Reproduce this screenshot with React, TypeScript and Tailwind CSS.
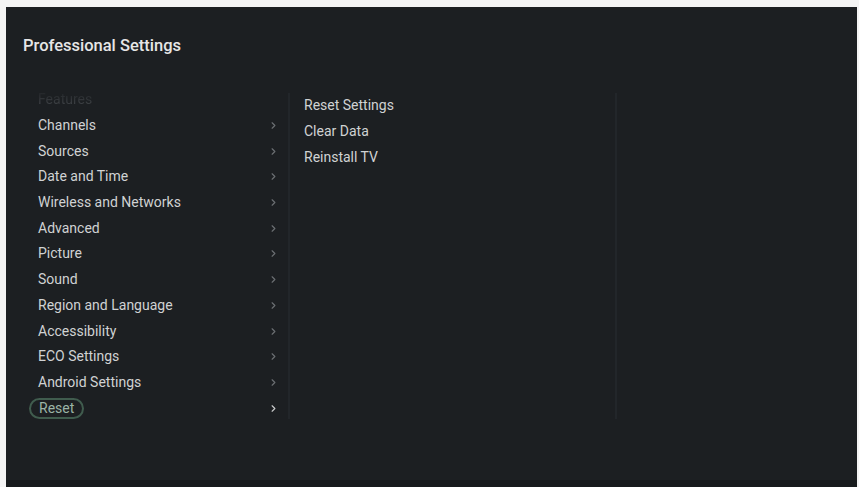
import { ChevronRight } from "lucide-react"

const menu = [
  "Channels",
  "Sources",
  "Date and Time",
  "Wireless and Networks",
  "Advanced",
  "Picture",
  "Sound",
  "Region and Language",
  "Accessibility",
  "ECO Settings",
  "Android Settings",
]

const subMenu = ["Reset Settings", "Clear Data", "Reinstall TV"]

export default function App() {
  return (
    <div className="flex h-[487px] w-[859px] flex-col bg-[#f4f4f4] pt-[7px] pl-[6px] pr-[2px] font-['Roboto','Liberation_Sans',sans-serif]">
      <div className="flex flex-1 flex-col bg-[#1c1f22]">
        <div className="px-[17px] pt-[28px] text-[16.5px] font-medium leading-[21px] text-[#e6e6e6]">
          Professional Settings
        </div>

        <div className="mt-[31px] flex h-[334px]">
          {/* left list */}
          <div className="flex w-[282px] flex-col">
            <div className="flex h-[26px] items-center pl-[32px]">
              <span className="bg-gradient-to-b from-[#1c1f22] to-[#4a4e52] bg-clip-text text-[14px] text-transparent">
                Features
              </span>
            </div>
            {menu.map((item) => (
              <div key={item} className="flex h-[26px] items-center justify-between pl-[32px] pr-[9px]">
                <span className="text-[14px] text-[#d0d2d3]">{item}</span>
                <ChevronRight className="h-[11px] w-[11px] text-[#6b6f73]" strokeWidth={2.5} />
              </div>
            ))}
            <div className="flex h-[26px] items-center justify-between pl-[23px] pr-[9px]">
              <span className="rounded-full border-2 border-[#405c4e] px-[8px] text-[14px] leading-[17px] text-[#9bb3a6]">
                Reset
              </span>
              <ChevronRight className="h-[11px] w-[11px] text-[#c9cbcc]" strokeWidth={2.5} />
            </div>
          </div>

          <div className="mt-[6px] mb-[2px] w-[2px] bg-[#22262a]" />

          {/* sub list */}
          <div className="flex w-[325px] flex-col pt-[5px]">
            {subMenu.map((item) => (
              <div key={item} className="flex h-[26px] items-center pl-[14px]">
                <span className="text-[14px] text-[#d0d2d3]">{item}</span>
              </div>
            ))}
          </div>

          <div className="mt-[6px] mb-[2px] w-[2px] bg-[#22262a]" />
        </div>

        <div className="flex-1" />
        <div className="h-[7px] bg-[#171a1c]" />
      </div>
    </div>
  )
}
